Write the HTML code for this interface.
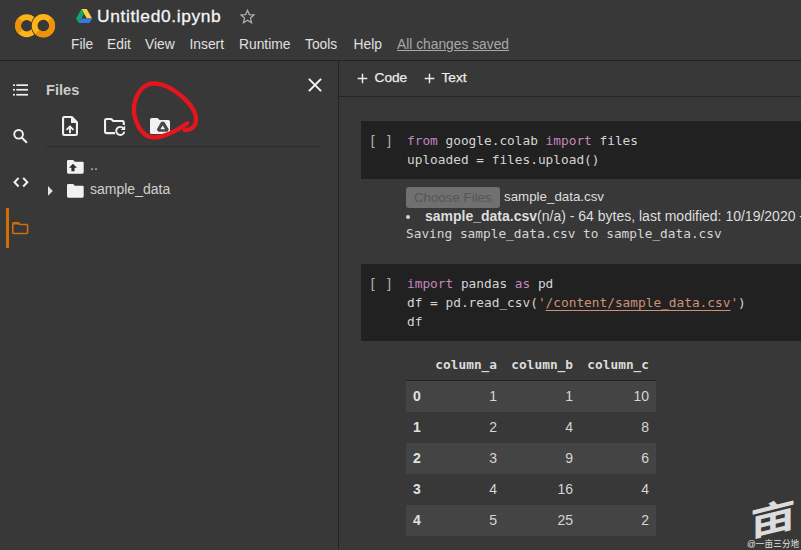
<!DOCTYPE html>
<html lang="en">
<head>
<meta charset="utf-8">
<title>Untitled0.ipynb - Colaboratory</title>
<style>
*{box-sizing:border-box;margin:0;padding:0}
html,body{width:801px;height:550px;overflow:hidden;background:#383838}
body{position:relative;font-family:"Liberation Sans","Noto Sans CJK SC",sans-serif;color:#d5d5d5;font-size:14px}
.abs{position:absolute;white-space:nowrap}
svg{position:absolute;overflow:visible}
/* header */
#hdrline{left:0;top:60px;width:801px;height:1px;background:#242424}
#title{left:97px;top:5px;font-size:17.4px;line-height:22px;color:#f4f4f4;letter-spacing:.62px;-webkit-text-stroke:.3px #f4f4f4}
.menu{top:37px;font-size:13.8px;line-height:16px;color:#e0e0e0}
#saved{color:#a8a8a8;text-decoration:underline}
/* left */
#vsep{left:338px;top:61px;width:1px;height:489px;background:#242424}
#filesT{left:46px;top:82px;font-size:14.6px;line-height:17px;font-weight:700;color:#cdcdcd}
#fsep{left:46px;top:146px;width:275px;height:1px;background:#2b2b2b}
.tree{font-size:14px;line-height:16px;color:#d0d0d0}
#obar{left:6px;top:208px;width:3px;height:40px;background:#cf6f0a}
/* right */
#tbline{left:339px;top:96px;width:462px;height:1px;background:#252525}
.tb{top:70px;font-size:13.7px;line-height:16px;color:#ececec;-webkit-text-stroke:.25px #ececec}
.cell{left:361px;width:440px;background:#212121}
.code{font-family:"DejaVu Sans Mono","Liberation Mono",monospace;font-size:12.8px;line-height:19px;color:#d4d4d4;letter-spacing:-.005px;white-space:pre}
.kw{color:#c586c0}
.str{color:#ce9178}
.str u{text-underline-offset:3px;text-decoration-thickness:1px}
.br{color:#ababab;font-size:14.2px;letter-spacing:-.3px}
#choose{left:406px;top:187px;width:93.6px;height:20.6px;background:#707070;border-radius:3px;color:#565656;font-size:13.33px;line-height:21px;text-align:center}
.row{left:406px;width:250px;height:31px;background:#444444}
.th{font-family:"DejaVu Sans Mono","Liberation Mono",monospace;font-weight:700;font-size:12.8px;line-height:16px;color:#dcdcdc;text-align:right}
.td{font-size:14px;line-height:16px;color:#d5d5d5;text-align:right}
.idx{font-size:14px;line-height:16px;color:#e0e0e0;font-weight:700;left:413px}
</style>
</head>
<body>
<!-- ============ HEADER ============ -->
<svg id="logo" style="left:10px;top:8px" width="50" height="36" viewBox="0 0 50 36">
  <defs><mask id="cm" maskUnits="userSpaceOnUse" x="0" y="0" width="50" height="36"><rect x="0" y="0" width="50" height="36" fill="#fff"/><circle cx="33.4" cy="17.7" r="12.5" fill="#000"/></mask></defs>
  <g mask="url(#cm)" fill="none" stroke-width="5.8">
    <circle cx="16.7" cy="17.7" r="8.65" stroke="#fbb518"/>
    <path d="M10.58 11.58 A8.65 8.65 0 0 0 10.58 23.82" stroke="#ee9209"/>
  </g>
  <g fill="none" stroke-width="5.8">
    <circle cx="33.4" cy="17.7" r="8.75" stroke="#fbb518"/>
    <path d="M39.59 11.51 A8.75 8.75 0 0 1 27.21 23.89" stroke="#ee9209"/>
  </g>
</svg>
<svg id="drive" style="left:76px;top:9px" width="16.2" height="14" viewBox="0 0 17 14" preserveAspectRatio="none">
  <path d="M5.7 0 L11.3 0 L17 9.6 L11.4 9.6 Z" fill="#ffcf48"/>
  <path d="M5.7 0 L8.5 4.8 L2.8 14 L0 9.6 Z" fill="#11a861"/>
  <path d="M5.6 9.6 L17 9.6 L14.2 14 L2.8 14 Z" fill="#3777e3"/>
</svg>
<div class="abs" id="title">Untitled0.ipynb</div>
<svg id="star" style="left:238.5px;top:7.5px" width="17" height="17" viewBox="0 0 24 24">
  <path d="M12 3.2 L14.6 9.3 L21.2 9.9 L16.2 14.2 L17.7 20.7 L12 17.3 L6.3 20.7 L7.8 14.2 L2.8 9.9 L9.4 9.3 Z" fill="none" stroke="#b2b2b2" stroke-width="1.7" stroke-linejoin="miter"/>
</svg>
<div class="abs menu" style="left:71px">File</div>
<div class="abs menu" style="left:107px">Edit</div>
<div class="abs menu" style="left:145px">View</div>
<div class="abs menu" style="left:189.5px">Insert</div>
<div class="abs menu" style="left:239px">Runtime</div>
<div class="abs menu" style="left:305px">Tools</div>
<div class="abs menu" style="left:353.5px">Help</div>
<div class="abs menu" id="saved" style="left:397px">All changes saved</div>
<div class="abs" id="hdrline"></div>

<!-- ============ LEFT RAIL ============ -->
<svg style="left:13px;top:84px" width="16" height="12" viewBox="0 0 16 12">
  <g fill="#f0f0f0"><rect x="0" y="0.3" width="1.9" height="1.7"/><rect x="3.3" y="0.3" width="11.7" height="1.7"/>
  <rect x="0" y="4.9" width="1.9" height="1.7"/><rect x="3.3" y="4.9" width="11.7" height="1.7"/>
  <rect x="0" y="9.9" width="1.9" height="1.7"/><rect x="3.3" y="9.9" width="11.7" height="1.7"/></g>
</svg>
<svg style="left:13px;top:128.5px" width="15" height="15" viewBox="0 0 15 15">
  <circle cx="5.6" cy="5.3" r="4.35" fill="none" stroke="#f2f2f2" stroke-width="1.9"/>
  <path d="M8.7 8.5 L13.9 13.8" stroke="#f2f2f2" stroke-width="2" fill="none"/>
</svg>
<svg style="left:12.5px;top:177px" width="16" height="11" viewBox="0 0 16 11">
  <path d="M5.6 0.9 L1.5 5.2 L5.6 9.5 M10.2 0.9 L14.3 5.2 L10.2 9.5" fill="none" stroke="#f2f2f2" stroke-width="2"/>
</svg>
<div class="abs" id="obar"></div>
<svg style="left:12.3px;top:221.5px" width="17" height="13" viewBox="0 0 17 13">
  <path d="M0.8 1.8 Q0.8 0.8 1.8 0.8 H6.4 L8 2.5 H14.6 Q15.6 2.5 15.6 3.5 V10.5 Q15.6 11.5 14.6 11.5 H1.8 Q0.8 11.5 0.8 10.5 Z" fill="none" stroke="#cf6f0a" stroke-width="1.6" stroke-linejoin="round"/>
  <path d="M0.8 0.8 H6.4 L8 2.5 H0.8 Z" fill="#cf6f0a"/>
</svg>

<!-- ============ FILES PANEL ============ -->
<div class="abs" id="filesT">Files</div>
<svg style="left:308px;top:78px" width="14" height="14" viewBox="0 0 14 14">
  <path d="M0.9 0.9 L13.1 13.1 M13.1 0.9 L0.9 13.1" stroke="#f5f5f5" stroke-width="2" fill="none"/>
</svg>
<!-- upload file -->
<svg style="left:62px;top:115.5px" width="16" height="20" viewBox="0 0 16 20">
  <path d="M2.3 1.05 H9.8 L14.95 6.2 V17.7 Q14.95 18.95 13.7 18.95 H2.3 Q1.05 18.95 1.05 17.7 V2.3 Q1.05 1.05 2.3 1.05 Z" fill="none" stroke="#f0f0f0" stroke-width="2.1" stroke-linejoin="round"/>
  <path d="M9 1 V7 H15 Z" fill="#f0f0f0"/>
  <path d="M4.5 13.9 L8 10.5 L11.5 13.9 M8 11 V17.3" fill="none" stroke="#f0f0f0" stroke-width="1.9"/>
</svg>
<!-- folder refresh -->
<svg style="left:104px;top:118px" width="22" height="18" viewBox="0 0 22 18">
  <path d="M11 15.1 H2.4 Q1.05 15.1 1.05 13.8 V2.4 Q1.05 1.05 2.4 1.05 H7.2 L9.2 3.05 H18.4 Q19.75 3.05 19.75 4.4 V7" fill="none" stroke="#f0f0f0" stroke-width="2.1" stroke-linejoin="round"/>
  <path d="M19.3 10.2 A4.1 4.1 0 1 0 20.3 13.6" fill="none" stroke="#f0f0f0" stroke-width="1.9"/>
  <path d="M21.2 7.4 V12 H16.6 Z" fill="#f0f0f0"/>
</svg>
<!-- folder drive -->
<svg style="left:150px;top:118px" width="20" height="16" viewBox="0 0 20 16">
  <path d="M1.6 0 H7.6 L9.6 2 H18.4 Q20 2 20 3.6 V14.4 Q20 16 18.4 16 H1.6 Q0 16 0 14.4 V1.6 Q0 0 1.6 0 Z" fill="#f1f1f1"/>
  <path d="M11.2 3.8 H14.2 L18.9 11.5 L17.4 13.7 H8.3 L6.8 11.4 Z M12.7 7.4 L10.4 11.3 H15 Z" fill="#484848" fill-rule="evenodd"/>
</svg>
<!-- red circle -->
<svg style="left:0;top:0" width="801" height="550" viewBox="0 0 801 550">
  <path d="M187.3 123.3 C186.0 124.2 182.7 126.7 179.7 128.4 C176.7 130.1 172.9 132.1 169.5 133.5 C166.1 134.9 162.8 136.2 159.4 136.7 C156.0 137.2 152.2 137.6 149.2 136.7 C146.2 135.8 143.6 133.4 141.5 131.0 C139.4 128.6 137.8 125.3 136.5 122.1 C135.2 118.9 134.1 115.5 133.9 111.9 C133.7 108.3 134.1 104.0 135.2 100.4 C136.3 96.8 138.2 93.0 140.3 90.3 C142.4 87.6 145.2 85.6 147.9 84.5 C150.7 83.4 153.6 83.4 156.8 83.7 C160.0 84.0 163.6 85.0 167.0 86.5 C170.4 88.0 174.0 90.5 177.2 92.8 C180.4 95.1 183.6 97.9 186.1 100.4 C188.6 103.0 190.8 105.5 192.4 108.1 C194.0 110.6 195.1 113.2 195.6 115.7 C196.1 118.2 196.1 121.3 195.6 123.3 C195.1 125.3 193.7 126.7 192.4 127.8 C191.1 128.9 189.3 129.3 188.0 129.7 C186.7 130.1 185.3 129.9 184.8 130.0" fill="none" stroke="#e2161c" stroke-width="4.4" stroke-linecap="round" stroke-linejoin="round"/>
</svg>
<div class="abs" id="fsep"></div>
<!-- tree -->
<svg style="left:66.5px;top:160px" width="16.7" height="13.7" viewBox="0 0 17 14" preserveAspectRatio="none">
  <path d="M1.4 0 H6.3 L8 1.7 H15.6 Q17 1.7 17 3.1 V12.6 Q17 14 15.6 14 H1.4 Q0 14 0 12.6 V1.4 Q0 0 1.4 0 Z" fill="#f1f1f1"/>
  <path d="M6.1 3.8 L10.2 7.8 H7.7 V11.4 H4.5 V7.8 H2 Z" fill="#2e2e2e"/>
</svg>
<div class="abs tree" style="left:90px;top:157px">..</div>
<svg style="left:48px;top:186.2px" width="4.8" height="9.8" viewBox="0 0 5 10"><path d="M0 0 L5 5 L0 10 Z" fill="#e4e4e4"/></svg>
<svg style="left:66.5px;top:184.1px" width="16.7" height="13.7" viewBox="0 0 17 14" preserveAspectRatio="none">
  <path d="M1.4 0 H6.3 L8 1.7 H15.6 Q17 1.7 17 3.1 V12.6 Q17 14 15.6 14 H1.4 Q0 14 0 12.6 V1.4 Q0 0 1.4 0 Z" fill="#f1f1f1"/>
</svg>
<div class="abs tree" style="left:90px;top:181px">sample_data</div>
<div class="abs" id="vsep"></div>

<!-- ============ MAIN ============ -->
<svg style="left:358px;top:74px" width="9" height="9" viewBox="0 0 9 9"><path d="M4.5 -0.3 V9.3 M-0.3 4.5 H9.3" stroke="#ececec" stroke-width="1.4" fill="none"/></svg>
<div class="abs tb" style="left:374.5px">Code</div>
<svg style="left:425px;top:74px" width="9" height="9" viewBox="0 0 9 9"><path d="M4.5 -0.3 V9.3 M-0.3 4.5 H9.3" stroke="#ececec" stroke-width="1.4" fill="none"/></svg>
<div class="abs tb" style="left:441.5px">Text</div>
<div class="abs" id="tbline"></div>

<!-- cell 1 -->
<div class="abs cell" style="top:121px;height:58px"></div>
<div class="abs code br" style="left:368.4px;top:132px">[ ]</div>
<div class="abs code" style="left:407px;top:131px"><span class="kw">from</span> google.colab <span class="kw">import</span> files
uploaded = files.upload()</div>
<div class="abs" id="choose">Choose Files</div>
<div class="abs" style="left:504px;top:189px;font-size:13.33px;line-height:16px;color:#dedede">sample_data.csv</div>
<div class="abs" style="left:406.2px;top:214.7px;width:4.2px;height:4.2px;border-radius:50%;background:#d5d5d5"></div>
<div class="abs" style="left:425px;top:208px;font-size:14px;line-height:16px;color:#dedede"><b>sample_data.csv</b>(n/a) - 64 bytes, last modified: 10/19/2020 - 100% done</div>
<div class="abs code" style="left:406px;top:224px;color:#d5d5d5">Saving sample_data.csv to sample_data.csv</div>

<!-- cell 2 -->
<div class="abs cell" style="top:264px;height:77px"></div>
<div class="abs code br" style="left:368.4px;top:275px">[ ]</div>
<div class="abs code" style="left:407px;top:274px"><span class="kw">import</span> pandas <span class="kw">as</span> pd
df = pd.read_csv(<span class="str">'<u>/content/sample_data.csv</u>'</span>)
df</div>

<!-- table -->
<div class="abs th" style="left:406px;width:91px;top:357px">column_a</div>
<div class="abs th" style="left:497px;width:76px;top:357px">column_b</div>
<div class="abs th" style="left:573px;width:76px;top:357px">column_c</div>
<div class="abs" style="left:406px;top:380px;width:250px;height:1px;background:#232323"></div>
<div class="abs row" style="top:381px"></div>
<div class="abs row" style="top:443px"></div>
<div class="abs row" style="top:505px"></div>

<div class="abs idx" style="top:388px">0</div>
<div class="abs idx" style="top:419px">1</div>
<div class="abs idx" style="top:450px">2</div>
<div class="abs idx" style="top:481px">3</div>
<div class="abs idx" style="top:512px">4</div>

<div class="abs td" style="left:406px;width:91px;top:388px">1</div>
<div class="abs td" style="left:406px;width:91px;top:419px">2</div>
<div class="abs td" style="left:406px;width:91px;top:450px">3</div>
<div class="abs td" style="left:406px;width:91px;top:481px">4</div>
<div class="abs td" style="left:406px;width:91px;top:512px">5</div>

<div class="abs td" style="left:497px;width:76px;top:388px">1</div>
<div class="abs td" style="left:497px;width:76px;top:419px">4</div>
<div class="abs td" style="left:497px;width:76px;top:450px">9</div>
<div class="abs td" style="left:497px;width:76px;top:481px">16</div>
<div class="abs td" style="left:497px;width:76px;top:512px">25</div>

<div class="abs td" style="left:573px;width:76px;top:388px">10</div>
<div class="abs td" style="left:573px;width:76px;top:419px">8</div>
<div class="abs td" style="left:573px;width:76px;top:450px">6</div>
<div class="abs td" style="left:573px;width:76px;top:481px">4</div>
<div class="abs td" style="left:573px;width:76px;top:512px">2</div>

<!-- watermark -->
<div class="abs" id="wmbig" style="left:750px;top:491px;width:46px;height:50px;font-family:'Noto Sans CJK SC','WenQuanYi Zen Hei',sans-serif;font-weight:700;font-size:46px;line-height:50px;text-align:center;color:#dcdcdc;transform:skewY(-14deg) scale(1,.78);transform-origin:50% 50%">亩</div>
<div class="abs" id="wmsmall" style="left:747px;top:539px;font-family:'Liberation Sans','Noto Sans CJK SC',sans-serif;font-size:8.6px;line-height:11px;color:#e6e6e6;letter-spacing:.1px">@一亩三分地</div>
</body>
</html>
